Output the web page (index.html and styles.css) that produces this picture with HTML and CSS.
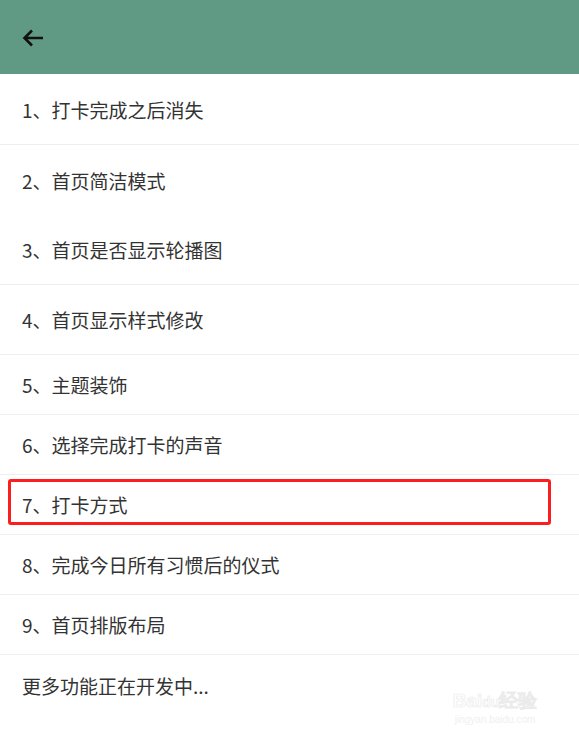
FILE: index.html
```html
<!DOCTYPE html>
<html lang="zh">
<head>
<meta charset="utf-8">
<link rel="stylesheet" href="styles.css">
</head>
<body>
<header class="bar">
  <svg class="back" width="22" height="18" viewBox="0 0 22 18" aria-hidden="true">
    <path d="M21 9H2.5M10 1.5L2.5 9l7.5 7.5" fill="none" stroke="#111" stroke-width="2.6" stroke-linecap="butt" stroke-linejoin="miter"/>
  </svg>
</header>
<main class="list">
  <div class="row tall">1、打卡完成之后消失</div>
  <div class="row tall nodiv">2、首页简洁模式</div>
  <div class="row mid">3、首页是否显示轮播图</div>
  <div class="row mid">4、首页显示样式修改</div>
  <div class="row">5、主题装饰</div>
  <div class="row">6、选择完成打卡的声音</div>
  <div class="row marked">7、打卡方式<span class="mark"></span></div>
  <div class="row">8、完成今日所有习惯后的仪式</div>
  <div class="row">9、首页排版布局</div>
  <div class="row last">更多功能正在开发中...</div>
</main>
<div class="wm">
  <div class="wm-top">Bai<span class="paw">du</span>经验</div>
  <div class="wm-url">jingyan.baidu.com</div>
</div>
</body>
</html>
```
FILE: styles.css
```css
html, body {
  margin: 0;
  padding: 0;
  background: #ffffff;
}
body {
  width: 579px;
  height: 737px;
  overflow: hidden;
  position: relative;
  font-family: "Noto Sans CJK SC", "Noto Sans", sans-serif;
}
.bar {
  height: 74px;
  background: #609a85;
  display: flex;
  align-items: center;
  padding-left: 22px;
  box-sizing: border-box;
}
.back {
  display: block;
  margin-top: 1px;
}
.list {
  display: flex;
  flex-direction: column;
}
.row {
  height: 59px;
  border-bottom: 1px solid #eeeeee;
  display: flex;
  align-items: center;
  padding-left: 22px;
  font-size: 19px;
  color: #333333;
  position: relative;
  flex: none;
}
.row.tall {
  height: 70px;
}
.row.mid {
  height: 69px;
}
.row.nodiv {
  border-bottom: none;
}
.row.last {
  border-bottom: none;
  height: 60px;
}
.mark {
  position: absolute;
  left: 8px;
  top: 4px;
  width: 543px;
  height: 46px;
  box-sizing: border-box;
  border: 3px solid #fa1e1e;
  border-radius: 3px;
}
.wm {
  position: absolute;
  left: 440px;
  top: 690px;
  width: 110px;
  font-family: "Liberation Sans", sans-serif;
  text-align: center;
}
.wm-top {
  font-size: 19px;
  font-weight: bold;
  line-height: 22px;
  color: #ffffff;
  -webkit-text-stroke: 0.7px #ebebeb;
}
.paw {
  font-size: 14px;
}
.wm-url {
  font-size: 10px;
  line-height: 14px;
  color: #f0f0f0;
}
```
